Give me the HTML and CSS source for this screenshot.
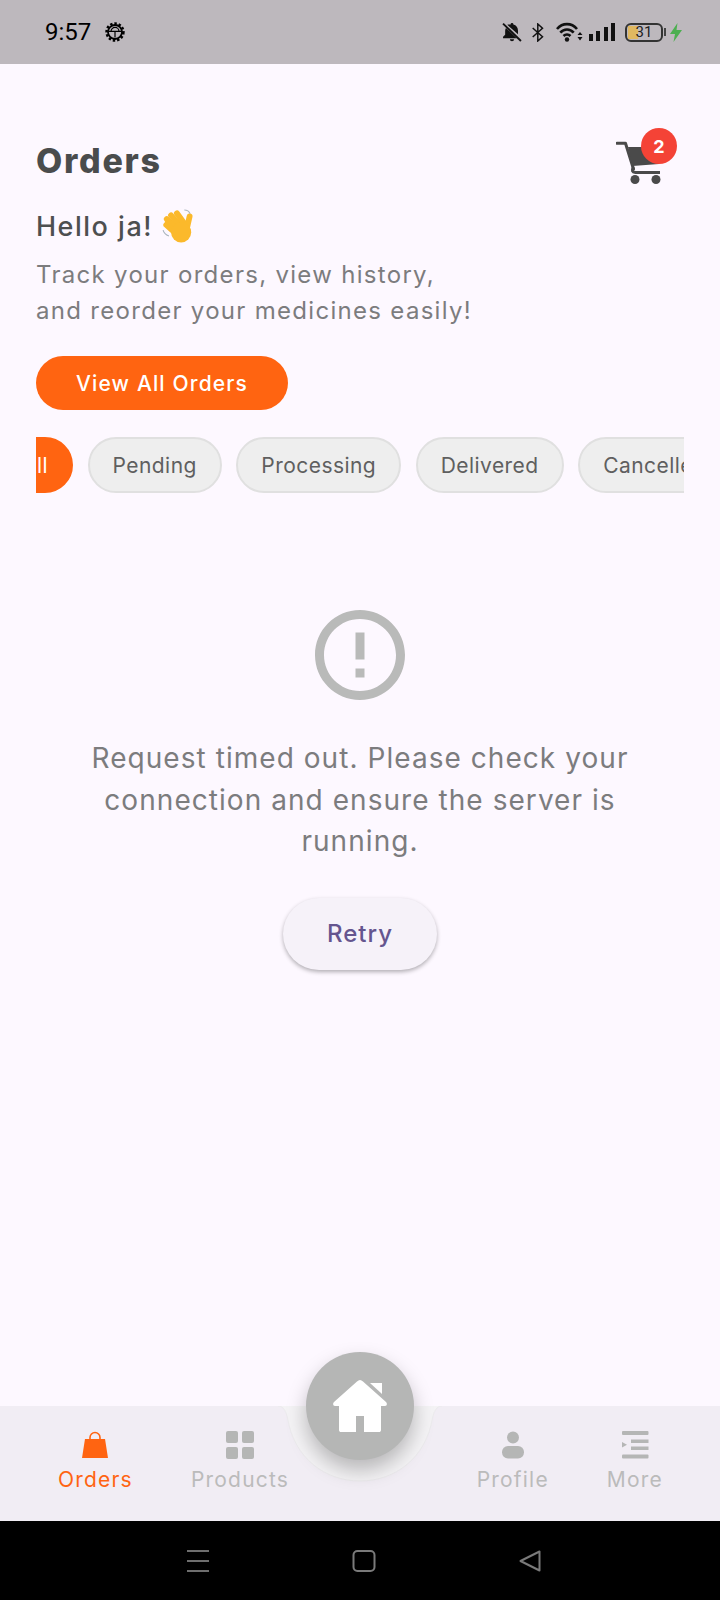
FILE: index.html
```html
<!DOCTYPE html>
<html lang="en">
<head>
    <meta charset="UTF-8">
    <meta name="viewport" content="width=device-width, initial-scale=1.0">
    <title>Orders</title>
    <link rel="stylesheet" href="styles.css">
</head>
<body>
    <div class="statusBar">
        <span class="clock">9:57</span>
        <svg class="gearIcon" width="20" height="20" viewBox="0 0 20 20">
            <circle cx="10" cy="10" r="8.4" fill="none" stroke="#000" stroke-width="2.6" stroke-dasharray="2.4 1.9"/>
            <circle cx="10" cy="10" r="7" fill="none" stroke="#000" stroke-width="1.8"/>
            <path d="M4 9.4H16M10 9.4V15.5M6 9.4a4 4 0 0 1 8 0" fill="none" stroke="#000" stroke-width="1.2"/>
        </svg>
        <div class="statusRight">
            <svg class="bellIcon" width="20" height="20" viewBox="0 0 19 19">
                <path d="M9.5 1a1.3 1.3 0 0 1 1.3 1.4c2.8.6 4.4 3 4.4 5.8v3.4L5 2.6C5.800 2.300 7 2.200 8.200 2.400A1.300 1.300 0 0 1 9.500 1ZM3.800 5.600 14 15.500H1v-1.400l2-2V8.200c0-1 .3-1.900.8-2.600ZM7.500 16.300h4a2 2 0 0 1-4 0Z" fill="#111"/>
                <path d="M1 1.500 18 18" stroke="#111" stroke-width="1.800"/>
            </svg>
            <svg class="btIcon" width="12" height="19" viewBox="0 0 12 19">
                <path d="M.7 5 10.500 13.800 5.800 18V1L10.500 5.200.7 14" fill="none" stroke="#111" stroke-width="1.500"/>
            </svg>
            <svg class="wifiIcon" width="27" height="20" viewBox="0 0 27 20">
                <path d="M1 7C6.500 .5 15.500 .5 21 7M4.300 10.700C8 6.500 14 6.500 17.700 10.700M7.500 14C9.500 12 12.500 12 14.500 14" fill="none" stroke="#111" stroke-width="2.600"/>
                <circle cx="11" cy="17.500" r="2.200" fill="#111"/>
                <path d="M21.500 13h5L24 10ZM21.500 15h5L24 18.500Z" fill="#111"/>
            </svg>
            <div class="signalBars">
                <span class="signalBar barOne"></span>
                <span class="signalBar barTwo"></span>
                <span class="signalBar barThree"></span>
                <span class="signalBar barFour"></span>
            </div>
            <div class="battery">
                <div class="batteryBody">
                    <span class="batteryFill"></span>
                    <span class="batteryText">31</span>
                </div>
                <span class="batteryNub"></span>
            </div>
            <svg class="boltIcon" width="12" height="19" viewBox="0 0 12 19">
                <path d="M7.500 0 0 11H5L3.500 19 12 7H6.500Z" fill="#4caf50"/>
            </svg>
        </div>
    </div>

    <div class="page">
        <div class="pageHeader">
            <h1 class="pageTitle">Orders</h1>
            <div class="cart">
                <svg width="46" height="44" viewBox="0 0 46 44">
                    <path d="M1 2.200H9.500L17.500 28" fill="none" stroke="#4a4a4a" stroke-width="3" stroke-linecap="round" stroke-linejoin="round"/>
                    <path d="M12 6H46L43 23 16.500 25Z" fill="#4a4a4a"/>
                    <path d="M17.500 26q-3 5 2 5.500H44" fill="none" stroke="#4a4a4a" stroke-width="3"/>
                    <circle cx="19" cy="38.500" r="4.500" fill="#4a4a4a"/>
                    <circle cx="40" cy="38.500" r="4.500" fill="#4a4a4a"/>
                </svg>
                <span class="cartBadge">2</span>
            </div>
        </div>

        <div class="greeting">
            <span>Hello ja!</span>
            <svg width="34" height="35" viewBox="0 0 32 33">
                <g fill="none" stroke="#fbb92b" stroke-width="5.500" stroke-linecap="round">
                    <path d="M4 15 14 24"/>
                    <path d="M4.500 9.500 14 19"/>
                    <path d="M8.500 6 17 15.500"/>
                    <path d="M14 4 20.500 13"/>
                    <path d="M26 7 23.500 18"/>
                </g>
                <circle cx="18" cy="22" r="9.500" fill="#fbb92b"/>
                <path d="M21 1q4 0 5.500 3.500M1 20q1 4 5.500 5.500" fill="none" stroke="#a9b4bd" stroke-width="1"/>
            </svg>
        </div>
        <p class="subtitle">Track your orders, view history,<br>and reorder your medicines easily!</p>
        <button type="button" class="viewAll">View All Orders</button>

        <div class="chips">
            <span class="chip chipActive">All</span>
            <span class="chip">Pending</span>
            <span class="chip">Processing</span>
            <span class="chip">Delivered</span>
            <span class="chip">Cancelled</span>
        </div>

        <div class="errorBox">
            <svg width="108" height="108" viewBox="0 0 24 24">
                <path d="M11 15h2v2h-2zm0-8h2v6h-2zm.99-5C6.470 2 2 6.480 2 12s4.470 10 9.990 10C17.520 22 22 17.520 22 12S17.520 2 11.990 2zM12 20c-4.420 0-8-3.580-8-8s3.580-8 8-8 8 3.580 8 8-3.580 8-8 8z" fill="#b9bab9"/>
            </svg>
            <p class="errorText">Request timed out. Please check your<br>connection and ensure the server is<br>running.</p>
            <button type="button" class="retry">Retry</button>
        </div>
    </div>

    <div class="bottomNav">
        <svg class="notch" width="180" height="82" viewBox="0 0 180 82">
            <path d="M0 0H8C14 0 16 6 17.500 12 24 52 55 75 90 75 125 75 156 52 162.500 12 164 6 166 0 172 0H180V0Z" fill="#f4f3f5"/>
            <path d="M8 0C14 0 16 6 17.500 12 24 52 55 75 90 75 125 75 156 52 162.500 12 164 6 166 0 172 0" fill="none" stroke="#ecebed" stroke-width="1"/>
        </svg>
        <div class="navGroup">
            <div class="navItem navActive">
                <svg width="28" height="28" viewBox="0 0 28 28">
                    <path d="M4 8H24L27 27H1Z" fill="#ff6411"/>
                    <path d="M9 10V6.500a5 5 0 0 1 10 0V10" fill="none" stroke="#ff6411" stroke-width="1.600"/>
                </svg>
                <span>Orders</span>
            </div>
            <div class="navItem">
                <svg width="28" height="28" viewBox="0 0 28 28">
                    <rect x="0" y="0" width="12" height="12" rx="2" fill="#b5b6b5"/>
                    <rect x="16" y="0" width="12" height="12" rx="2" fill="#b5b6b5"/>
                    <rect x="0" y="16" width="12" height="12" rx="2" fill="#b5b6b5"/>
                    <rect x="16" y="16" width="12" height="12" rx="2" fill="#b5b6b5"/>
                </svg>
                <span>Products</span>
            </div>
        </div>
        <div class="navGroup">
            <div class="navItem">
                <svg width="28" height="28" viewBox="0 0 28 28">
                    <circle cx="14" cy="6.500" r="6" fill="#b5b6b5"/>
                    <rect x="3" y="15" width="22" height="12.500" rx="6" fill="#b5b6b5"/>
                </svg>
                <span>Profile</span>
            </div>
            <div class="navItem">
                <svg width="28" height="28" viewBox="0 0 28 28">
                    <rect x="1" y="0" width="26.500" height="4" rx="1" fill="#b5b6b5"/>
                    <rect x="10" y="8.500" width="17.500" height="3.500" fill="#b5b6b5"/>
                    <rect x="10" y="15.500" width="17.500" height="3.500" fill="#b5b6b5"/>
                    <rect x="1" y="23.500" width="26.500" height="4" rx="1" fill="#b5b6b5"/>
                    <path d="M1 11V16.500L6 13.700Z" fill="#b5b6b5"/>
                </svg>
                <span>More</span>
            </div>
        </div>
        <div class="homeButton">
            <svg width="54" height="54" viewBox="0 0 54 54">
                <path d="M27 1C28 1 29 1.500 30 2.500L53 23C54.500 24.500 54 27 52 27H48V51C48 52.500 47 53 46 53H31V37H23V53H8C7 53 6 52.500 6 51V27H2C0 27 -.5 24.500 1 23L24 2.500C25 1.500 26 1 27 1Z" fill="#fff"/>
                <path d="M37 4H49V15Z" fill="#fff"/>
            </svg>
        </div>
    </div>

    <div class="systemBar">
        <svg width="22" height="22" viewBox="0 0 22 22">
            <path d="M0 1H22M0 11H22M0 21H22" stroke="#6e6e6e" stroke-width="2"/>
        </svg>
        <svg width="24" height="22" viewBox="0 0 24 22">
            <rect x="1.500" y="1" width="21" height="20" rx="4" fill="none" stroke="#7a7a7a" stroke-width="2"/>
        </svg>
        <svg width="22" height="22" viewBox="0 0 22 22">
            <path d="M20.500 1.500V20.500L1.500 11Z" fill="none" stroke="#7a7a7a" stroke-width="2" stroke-linejoin="round"/>
        </svg>
    </div>
</body>
</html>
```

FILE: styles.css
```css
* {
    box-sizing: border-box;
}

body {
    font-family: 'Inter', 'Liberation Sans', sans-serif;
    margin: 0;
    padding: 0;
    width: 720px;
    height: 1600px;
    display: flex;
    flex-direction: column;
    overflow: hidden;
    background-color: #fdf8ff;
}

.statusBar {
    height: 64px;
    flex-shrink: 0;
    background-color: #bdb8bd;
    display: flex;
    align-items: center;
    padding: 0 38px 0 45px;
    color: #000;
}

.clock {
    font-family: 'Roboto', sans-serif;
    font-size: 24px;
}

.gearIcon {
    margin-left: 14px;
}

.statusRight {
    margin-left: auto;
    display: flex;
    align-items: center;
}

.btIcon {
    margin-left: 10px;
}

.wifiIcon {
    margin-left: 12px;
}

.signalBars {
    margin-left: 6px;
    width: 26px;
    height: 18px;
    display: flex;
    justify-content: space-between;
    align-items: flex-end;
}

.signalBar {
    width: 4px;
    background-color: #111;
}

.barOne {
    height: 7px;
}

.barTwo {
    height: 10px;
}

.barThree {
    height: 14px;
}

.barFour {
    height: 18px;
}

.battery {
    margin-left: 10px;
    display: flex;
    align-items: center;
}

.batteryBody {
    position: relative;
    width: 38px;
    height: 19px;
    border: 2px solid #333;
    border-radius: 6px;
    overflow: hidden;
    display: flex;
    align-items: center;
    justify-content: center;
}

.batteryFill {
    position: absolute;
    left: 1px;
    top: 1px;
    bottom: 1px;
    width: 10px;
    background-color: #e0b860;
}

.batteryText {
    position: relative;
    font-family: 'Roboto', sans-serif;
    font-size: 15px;
    color: #222;
}

.batteryNub {
    width: 2px;
    height: 8px;
    background-color: #444;
    margin-left: 1px;
}

.boltIcon {
    margin-left: 4px;
}

.page {
    flex: 1;
    padding: 0 36px;
    min-height: 0;
}

.pageHeader {
    display: flex;
    justify-content: space-between;
    align-items: center;
    margin-top: 76px;
    padding-right: 22px;
}

.pageTitle {
    margin: 0;
    padding-bottom: 5px;
    font-size: 34px;
    font-weight: 800;
    letter-spacing: 1.7px;
    color: #4a4c4d;
}

.cart {
    position: relative;
    width: 46px;
    height: 44px;
}

.cart svg {
    display: block;
}

.cartBadge {
    position: absolute;
    top: -13px;
    left: 25px;
    width: 36px;
    height: 36px;
    border-radius: 50%;
    background-color: #f44336;
    color: #fff;
    font-size: 18px;
    font-weight: 700;
    display: flex;
    align-items: center;
    justify-content: center;
}

.greeting {
    display: flex;
    align-items: center;
    gap: 9px;
    margin-top: 23px;
    font-size: 27px;
    font-weight: 500;
    letter-spacing: 1.5px;
    color: #4d4f50;
}

.subtitle {
    margin: 13px 0 0;
    font-size: 24px;
    line-height: 36px;
    letter-spacing: 1.3px;
    color: #7c7c7e;
}

.viewAll {
    display: block;
    width: 252px;
    height: 54px;
    margin-top: 27px;
    border: none;
    border-radius: 27px;
    background-color: #ff6411;
    color: #fff;
    font-family: inherit;
    font-size: 21px;
    font-weight: 500;
    letter-spacing: 1.15px;
}

.chips {
    display: flex;
    gap: 14.5px;
    margin-top: 27px;
    overflow: hidden;
}

.chip {
    flex-shrink: 0;
    height: 56px;
    padding: 0 23px;
    border: 2px solid #e0e0e0;
    border-radius: 28px;
    background-color: #eeeeee;
    color: #5f5f5f;
    font-size: 21px;
    letter-spacing: 0.45px;
    display: flex;
    align-items: center;
}

.chipActive {
    margin-left: -39px;
    background-color: #ff6411;
    border-color: #ff6411;
    color: #fff;
}

.errorBox {
    display: flex;
    flex-direction: column;
    align-items: center;
    margin-top: 108px;
}

.errorBox svg {
    display: block;
}

.errorText {
    margin: 29px 0 0;
    font-size: 28px;
    line-height: 41.6px;
    letter-spacing: 1.05px;
    text-align: center;
    color: #7c7c7e;
}

.retry {
    width: 154px;
    height: 72px;
    margin-top: 35px;
    border: none;
    border-radius: 36px;
    background-color: #f6f2f9;
    color: #65558f;
    font-family: inherit;
    font-size: 24px;
    font-weight: 500;
    letter-spacing: 1px;
    box-shadow: 0 2px 4px rgba(0, 0, 0, 0.3);
}

.bottomNav {
    position: relative;
    height: 115px;
    flex-shrink: 0;
    background-color: #f1edf4;
    display: flex;
    justify-content: space-between;
    padding: 25px 57px 0 58px;
}

.notch {
    position: absolute;
    left: 270px;
    top: 0;
}

.navGroup {
    position: relative;
    display: flex;
    gap: 58px;
}

.navItem {
    display: flex;
    flex-direction: column;
    align-items: center;
    gap: 8px;
    font-size: 21px;
    letter-spacing: 1.2px;
    color: #bbbbbb;
}

.navItem svg {
    display: block;
}

.navActive {
    color: #ff6411;
}

.homeButton {
    position: absolute;
    left: 306px;
    top: -54px;
    width: 108px;
    height: 108px;
    border-radius: 50%;
    background-color: #b5b6b5;
    box-shadow: 0 10px 20px rgba(0, 0, 0, 0.25);
    display: flex;
    align-items: center;
    justify-content: center;
}

.systemBar {
    height: 79px;
    flex-shrink: 0;
    background-color: #000;
    display: flex;
    justify-content: center;
    align-items: center;
    gap: 143px;
    padding-left: 8px;
}
```
